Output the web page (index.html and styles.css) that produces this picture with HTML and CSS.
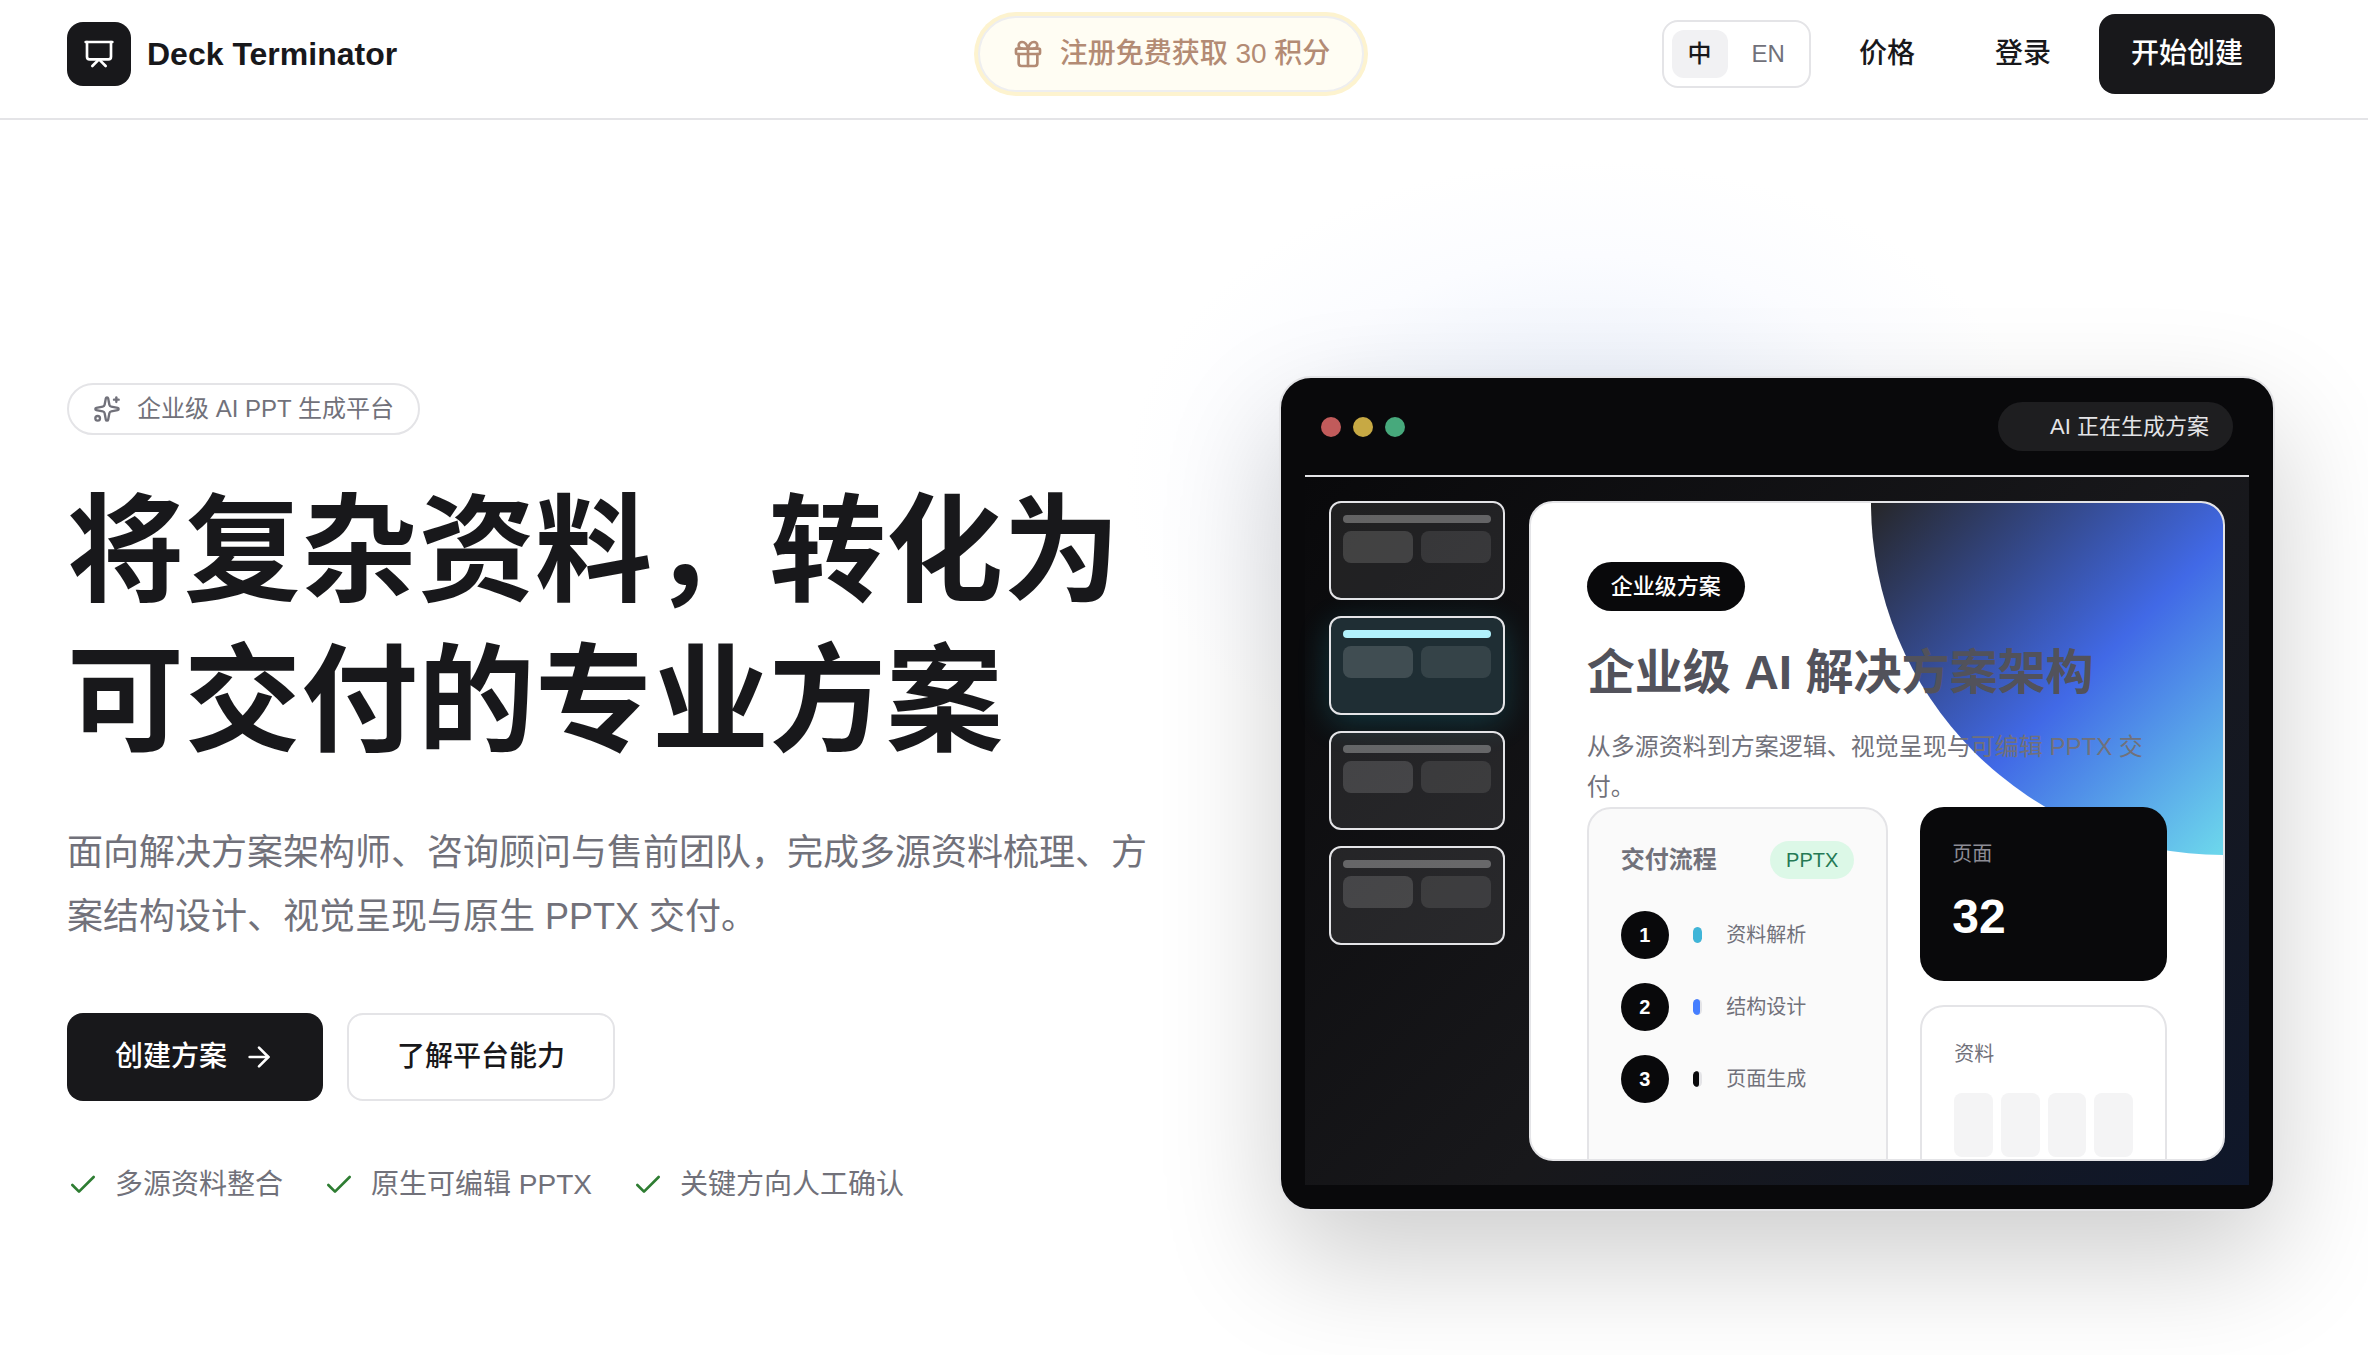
FILE: index.html
```html
<!DOCTYPE html>
<html lang="zh-CN">
<head>
    <meta charset="UTF-8">
    <meta name="viewport" content="width=device-width, initial-scale=1.0">
    <title>Deck Terminator</title>
    <link rel="stylesheet" href="styles.css">
</head>
<body>
    <header class="header">
        <a href="#" class="logo">
            <span class="logo-mark">
                <svg class="icon" viewBox="0 0 24 24"><path d="M2 3h20"/><path d="M21 3v11a2 2 0 0 1-2 2H5a2 2 0 0 1-2-2V3"/><path d="m7 21 5-5 5 5"/></svg>
            </span>
            Deck Terminator
        </a>
        <a href="#" class="promo">
            <svg class="icon" viewBox="0 0 24 24"><rect x="3" y="8" width="18" height="4" rx="1"/><path d="M12 8v13"/><path d="M19 12v7a2 2 0 0 1-2 2H7a2 2 0 0 1-2-2v-7"/><path d="M7.5 8a2.5 2.5 0 0 1 0-5A4.8 8 0 0 1 12 8a4.8 8 0 0 1 4.5-5 2.5 2.5 0 0 1 0 5"/></svg>
            注册免费获取 30 积分
        </a>
        <nav class="nav">
            <div class="lang">
                <button type="button" class="active">中</button>
                <button type="button">EN</button>
            </div>
            <a href="#" class="nav-link">价格</a>
            <a href="#" class="nav-link">登录</a>
            <a href="#" class="nav-link nav-cta">开始创建</a>
        </nav>
    </header>

    <main class="hero">
        <section class="intro">
            <div class="tag">
                <svg class="icon" viewBox="0 0 24 24"><path d="M11.017 2.814a1 1 0 0 1 1.966 0l1.051 5.558a2 2 0 0 0 1.594 1.594l5.558 1.051a1 1 0 0 1 0 1.966l-5.558 1.051a2 2 0 0 0-1.594 1.594l-1.051 5.558a1 1 0 0 1-1.966 0l-1.051-5.558a2 2 0 0 0-1.594-1.594l-5.558-1.051a1 1 0 0 1 0-1.966l5.558-1.051a2 2 0 0 0 1.594-1.594z"/><path d="M20 2v4"/><path d="M22 4h-4"/><circle cx="4" cy="20" r="2"/></svg>
                企业级 AI PPT 生成平台
            </div>
            <h1>将复杂资料，转化为<br>可交付的专业方案</h1>
            <p class="lead">面向解决方案架构师、咨询顾问与售前团队，完成多源资料梳理、方案结构设计、视觉呈现与原生 PPTX 交付。</p>
            <div class="actions">
                <a href="#" class="btn btn-dark">
                    创建方案
                    <svg class="icon" viewBox="0 0 24 24"><path d="M5 12h14"/><path d="m12 5 7 7-7 7"/></svg>
                </a>
                <a href="#" class="btn btn-light">了解平台能力</a>
            </div>
            <ul class="checks">
                <li><svg class="icon" viewBox="0 0 24 24"><path d="M20 6 9 17l-5-5"/></svg>多源资料整合</li>
                <li><svg class="icon" viewBox="0 0 24 24"><path d="M20 6 9 17l-5-5"/></svg>原生可编辑 PPTX</li>
                <li><svg class="icon" viewBox="0 0 24 24"><path d="M20 6 9 17l-5-5"/></svg>关键方向人工确认</li>
            </ul>
        </section>

        <section class="window">
            <div class="toolbar">
                <div class="dots">
                    <span class="dot red"></span>
                    <span class="dot yellow"></span>
                    <span class="dot green"></span>
                </div>
                <div class="status">AI 正在生成方案</div>
            </div>
            <div class="workspace">
                <div class="thumbs">
                    <div class="thumb"><span class="line"></span><span></span><span></span></div>
                    <div class="thumb current"><span class="line"></span><span></span><span></span></div>
                    <div class="thumb"><span class="line"></span><span></span><span></span></div>
                    <div class="thumb"><span class="line"></span><span></span><span></span></div>
                </div>
                <article class="slide">
                    <div class="slide-tag">企业级方案</div>
                    <h2>企业级 AI 解决方案架构</h2>
                    <p class="slide-text">从多源资料到方案逻辑、视觉呈现与可编辑 PPTX 交付。</p>
                    <div class="panels">
                        <div class="panel flow">
                            <div class="flow-head">
                                <h3>交付流程</h3>
                                <span class="format">PPTX</span>
                            </div>
                            <ol class="steps">
                                <li><b>1</b><span class="track"><span class="fill cyan"></span></span>资料解析</li>
                                <li><b>2</b><span class="track"><span class="fill blue"></span></span>结构设计</li>
                                <li><b>3</b><span class="track"><span class="fill black"></span></span>页面生成</li>
                            </ol>
                        </div>
                        <div class="side">
                            <div class="panel pages">
                                <div class="label">页面</div>
                                <div class="number">32</div>
                            </div>
                            <div class="panel sources">
                                <div class="label">资料</div>
                                <div class="bars"><span></span><span></span><span></span><span></span></div>
                            </div>
                        </div>
                    </div>
                </article>
            </div>
        </section>
    </main>
</body>
</html>
```
FILE: styles.css
```css
* {
    box-sizing: border-box;
}
body {
    font-family: "Liberation Sans", "Noto Sans CJK SC", sans-serif;
    line-height: 1.5;
    margin: 0;
    background-color: #fff;
    color: #18181b;
    overflow-x: hidden;
}
a {
    color: inherit;
    text-decoration: none;
}
h1, h2, h3, p, ul, ol {
    margin: 0;
    padding: 0;
}
ul, ol {
    list-style: none;
}
.icon {
    width: 32px;
    height: 32px;
    flex: none;
    fill: none;
    stroke: currentColor;
    stroke-width: 2;
    stroke-linecap: round;
    stroke-linejoin: round;
}

/* header */
.header {
    display: grid;
    grid-template-columns: 1fr auto 1fr;
    align-items: center;
    height: 120px;
    padding: 0 93px 10px 67px;
    border-bottom: 2px solid #e4e4e7;
}
.logo {
    display: flex;
    align-items: center;
    gap: 16px;
    font-size: 32px;
    font-weight: bold;
}
.logo-mark {
    display: flex;
    align-items: center;
    justify-content: center;
    width: 64px;
    height: 64px;
    border-radius: 16px;
    background: #18181b;
    color: white;
}
.promo {
    display: flex;
    align-items: center;
    gap: 16px;
    height: 76px;
    padding: 0 32px;
    border: 2px solid #eeeeef;
    border-radius: 38px;
    background: #fffdf3;
    box-shadow: 0 0 0 4px #fdf3cf;
    color: #b38b74;
    font-size: 28px;
    font-weight: 500;
}
.nav {
    display: flex;
    align-items: center;
    justify-content: flex-end;
    gap: 16px;
}
.lang {
    display: flex;
    gap: 8px;
    padding: 8px;
    border: 2px solid #e4e4e7;
    border-radius: 16px;
}
.lang button {
    height: 48px;
    padding: 0 16px;
    border: none;
    border-radius: 12px;
    background: none;
    color: #71717a;
    font-family: inherit;
    font-size: 24px;
    line-height: 36px;
    cursor: pointer;
}
.lang .active {
    background: #f1f1f3;
    color: #18181b;
    font-weight: 500;
}
.nav-link {
    height: 80px;
    padding: 0 32px;
    border-radius: 16px;
    font-size: 28px;
    font-weight: 500;
    line-height: 80px;
}
.nav-cta {
    background: #18181b;
    color: white;
}

/* hero */
.hero {
    display: grid;
    grid-template-columns: minmax(0, 1.088fr) minmax(0, 1fr);
    align-items: center;
    gap: 128px;
    padding: 256px 93px 144px 67px;
    background: radial-gradient(ellipse 460px 320px at 67% 360px, #e4ebfa, #f0f4fc 35%, #fbfcff 70%, #fff);
}
.tag {
    display: flex;
    align-items: center;
    gap: 16px;
    width: fit-content;
    height: 52px;
    padding: 0 24px;
    border: 2px solid #e4e4e7;
    border-radius: 26px;
    background: white;
    color: #71717a;
    font-size: 24px;
}
.tag .icon {
    width: 28px;
    height: 28px;
}
h1 {
    margin-top: 42px;
    font-size: 117px;
    line-height: 150px;
}
.lead {
    margin-top: 44px;
    color: #71717a;
    font-size: 36px;
    line-height: 64px;
}
.actions {
    display: flex;
    gap: 24px;
    margin-top: 64px;
}
.btn {
    display: flex;
    align-items: center;
    gap: 16px;
    height: 88px;
    padding: 0 48px;
    border-radius: 16px;
    font-size: 28px;
    font-weight: 500;
}
.btn-dark {
    background: #18181b;
    color: white;
}
.btn-light {
    border: 2px solid #e4e4e7;
    background: white;
}
.checks {
    display: flex;
    gap: 40px;
    margin-top: 64px;
    color: #71717a;
    font-size: 28px;
    line-height: 40px;
}
.checks li {
    display: flex;
    align-items: center;
    gap: 16px;
}
.checks .icon {
    color: #2e7d32;
}

/* app window */
.window {
    padding: 24px;
    border: 2px solid #e4e4e7;
    border-radius: 32px;
    background: #09090b;
    box-shadow: 0 48px 120px rgba(0, 0, 0, 0.2);
}
.toolbar {
    display: flex;
    align-items: center;
    justify-content: space-between;
    padding: 0 16px 24px;
    border-bottom: 2px solid #e4e4e7;
}
.dots {
    display: flex;
    gap: 12px;
}
.dot {
    width: 20px;
    height: 20px;
    border-radius: 50%;
}
.red {
    background: #c15b5b;
}
.yellow {
    background: #c7a944;
}
.green {
    background: #47a97c;
}
.status {
    padding: 8px 24px 8px 52px;
    border-radius: 25px;
    background: #1e1e20;
    color: #e4e4e7;
    font-size: 22px;
    line-height: 33px;
}
.workspace {
    display: grid;
    grid-template-columns: 176px minmax(0, 1fr);
    gap: 24px;
    padding: 24px;
    background: linear-gradient(135deg, #09090b, #18181b 55%, #0f172a);
}
.thumbs {
    display: flex;
    flex-direction: column;
    gap: 16px;
}
.thumb {
    display: grid;
    grid-template-columns: 1fr 1fr;
    grid-template-rows: 8px 32px;
    gap: 8px;
    aspect-ratio: 16 / 9;
    padding: 12px;
    border: 2px solid #e4e4e7;
    border-radius: 12px;
    background: rgba(255, 255, 255, 0.09);
}
.thumb span {
    border-radius: 8px;
    background: rgba(255, 255, 255, 0.15);
}
.thumb span:last-child {
    background: rgba(255, 255, 255, 0.1);
}
.thumb .line {
    grid-column: span 2;
    border-radius: 4px;
    background: rgba(255, 255, 255, 0.3);
}
.current {
    background: #1f2e34;
    box-shadow: 0 8px 32px rgba(34, 211, 238, 0.2);
}
.current .line {
    background: #b2f1fc;
}

/* slide preview */
.slide {
    position: relative;
    height: 660px;
    padding: 59px 56px 0;
    border: 2px solid #e4e4e7;
    border-radius: 24px;
    background: white;
    overflow: hidden;
}
.slide::before {
    content: "";
    position: absolute;
    top: 0;
    right: 0;
    width: 352px;
    height: 352px;
    border-bottom-left-radius: 100%;
    background: linear-gradient(135deg, #262628, #4169e6 55%, #6dd8ec);
}
.slide > * {
    position: relative;
}
.slide-tag {
    width: fit-content;
    padding: 8px 24px;
    border-radius: 25px;
    background: #09090b;
    color: white;
    font-size: 22px;
    font-weight: 500;
    line-height: 33px;
}
h2 {
    margin-top: 32px;
    color: #52525b;
    font-size: 48px;
    line-height: 60px;
}
.slide-text {
    margin-top: 24px;
    color: #71717a;
    font-size: 24px;
    line-height: 40px;
}
.panels {
    display: grid;
    grid-template-columns: minmax(0, 11fr) minmax(0, 9fr);
    gap: 32px;
}
.panel {
    padding: 32px;
    border: 2px solid #e4e4e7;
    border-radius: 24px;
    background: white;
}
.flow {
    height: 400px;
    background: #fafafa;
}
.flow-head {
    display: flex;
    align-items: center;
    justify-content: space-between;
}
h3 {
    color: #71717a;
    font-size: 24px;
}
.format {
    padding: 4px 16px;
    border-radius: 19px;
    background: #dcf8e7;
    color: #257a55;
    font-size: 20px;
    line-height: 30px;
}
.steps {
    display: grid;
    gap: 24px;
    margin-top: 32px;
}
.steps li {
    display: grid;
    grid-template-columns: 48px 1fr 128px;
    align-items: center;
    gap: 24px;
    color: #71717a;
    font-size: 20px;
}
.steps b {
    border-radius: 50%;
    background: #09090b;
    color: white;
    line-height: 48px;
    text-align: center;
}
.track {
    height: 16px;
    border-radius: 8px;
    background: #e4e4e7;
    overflow: hidden;
}
.fill {
    display: block;
    height: 100%;
    border-radius: 8px;
}
.cyan {
    background: #3fb5d8;
}
.blue {
    width: 80%;
    background: #457eff;
}
.black {
    width: 60%;
    background: #09090b;
}
.side {
    display: flex;
    flex-direction: column;
    gap: 24px;
}
.label {
    color: #71717a;
    font-size: 20px;
    line-height: 30px;
}
.pages {
    border: none;
    background: #09090b;
}
.pages .label {
    color: #8d8d96;
}
.number {
    margin-top: 16px;
    color: white;
    font-size: 48px;
    font-weight: bold;
    line-height: 64px;
}
.bars {
    display: grid;
    grid-template-columns: repeat(4, 1fr);
    gap: 8px;
    margin-top: 24px;
}
.bars span {
    height: 64px;
    border-radius: 8px;
    background: #f4f4f5;
}
```
